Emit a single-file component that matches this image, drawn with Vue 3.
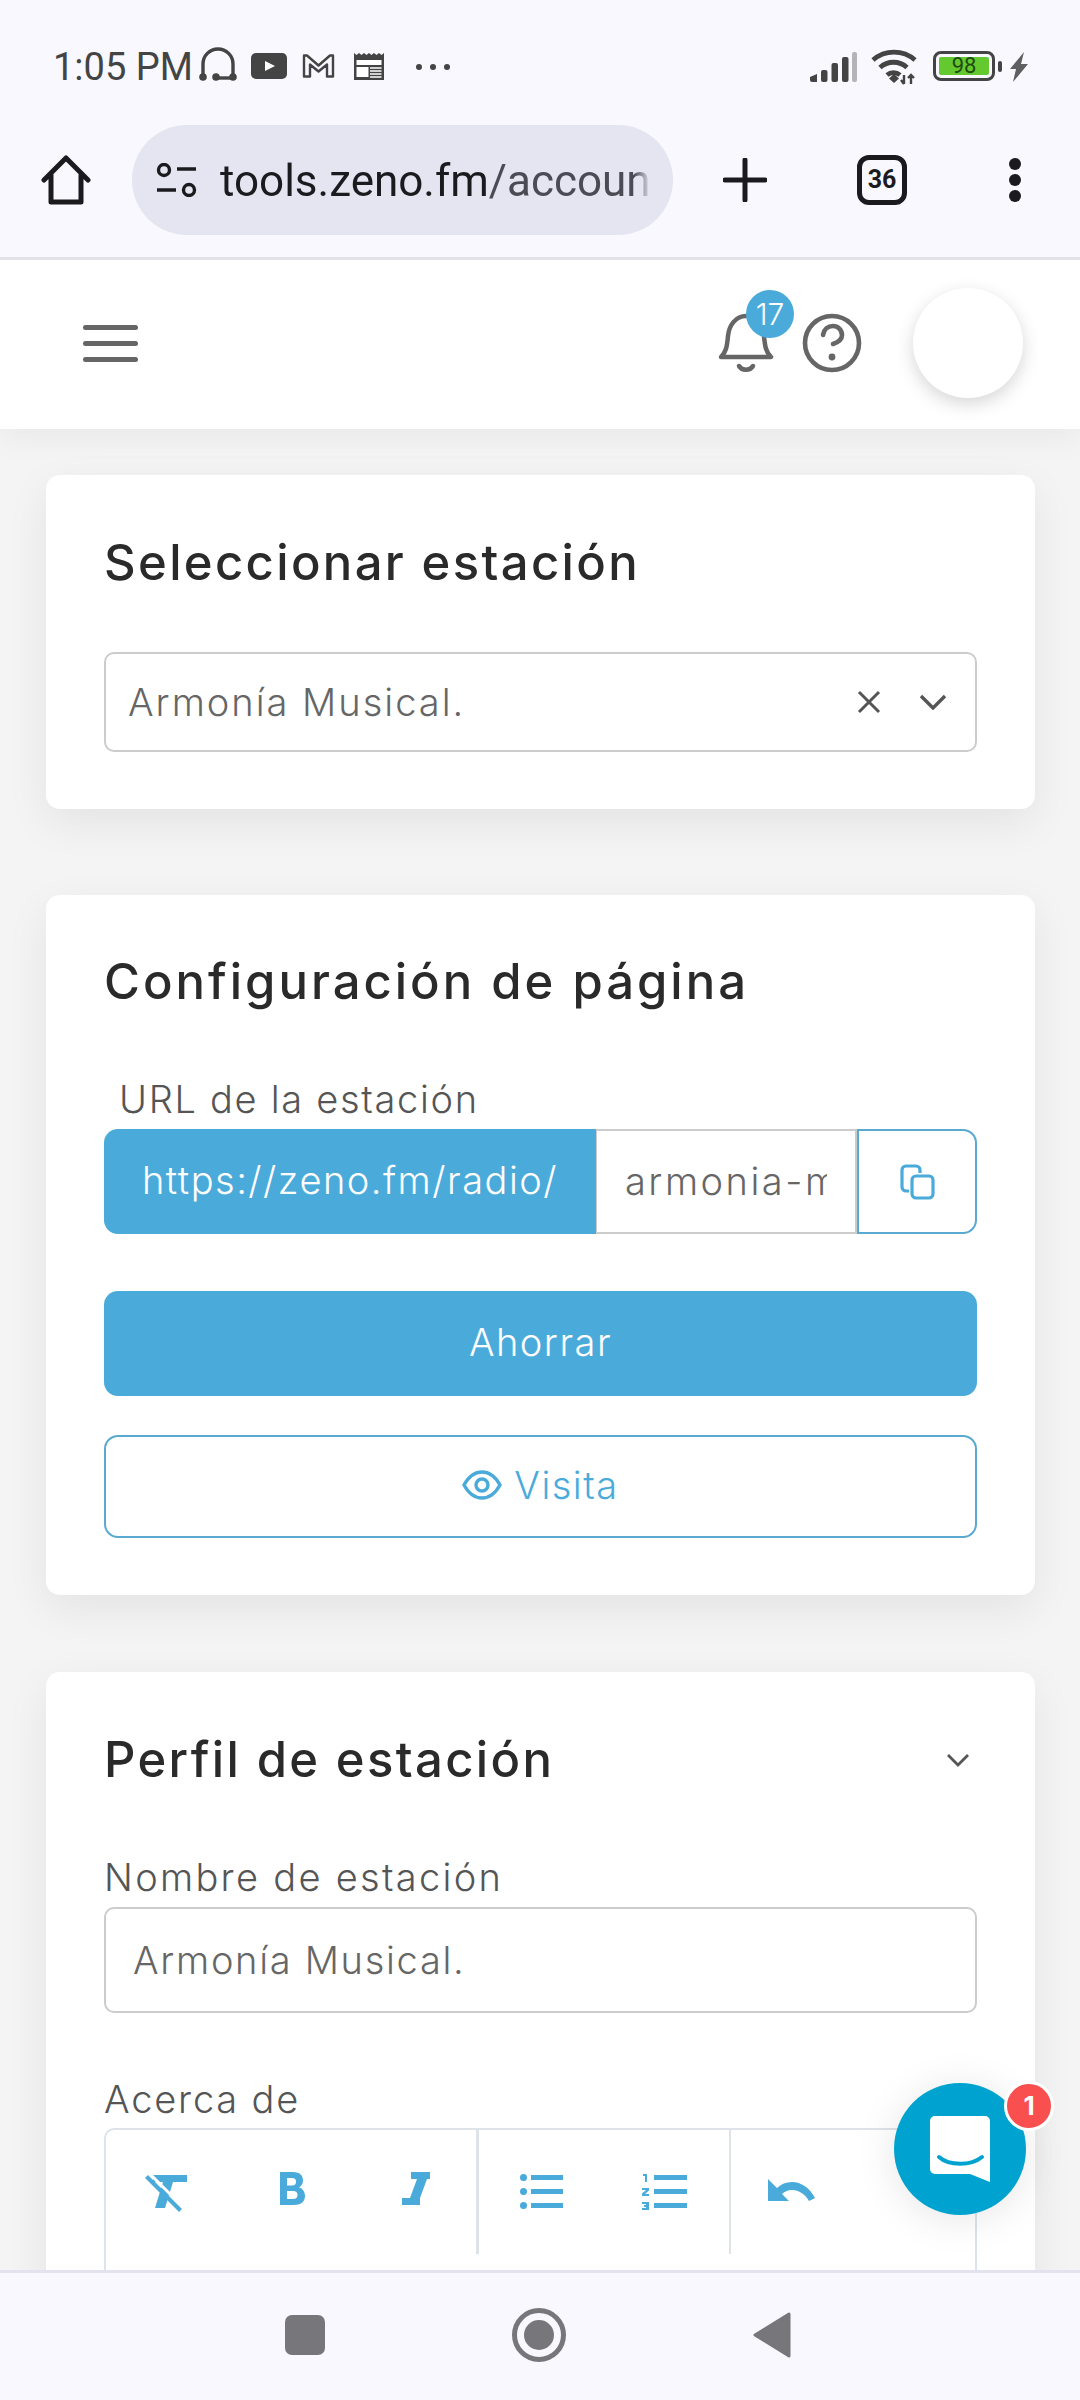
<script setup>
</script>

<template>
  <div class="phone">
    <header class="chrome">
      <div class="status">
        <span class="time">1:05 PM</span>
        <svg class="si headset" viewBox="0 0 38 36"><path d="M4 28V17a15 15 0 0 1 30 0v11" fill="none" stroke="#444" stroke-width="3.4"/><path d="M16 31h18" stroke="#444" stroke-width="3.4"/><circle cx="4" cy="30" r="3.8" fill="#444"/><circle cx="17" cy="30" r="3.8" fill="#444"/><circle cx="34" cy="30" r="3.8" fill="#444"/></svg>
        <svg class="si yt" viewBox="0 0 36 26"><rect width="36" height="26" rx="5" fill="#444"/><path d="M14 8l10 5-10 5z" fill="#fff"/></svg>
        <svg class="si gm" viewBox="0 0 33 26"><path d="M2 24V3h3l11.5 10L28 3h3v21h-6V12l-8.500 7-8.500-7v12z" fill="none" stroke="#444" stroke-width="2.4" stroke-linejoin="round"/></svg>
        <svg class="si news" viewBox="0 0 30 28"><path d="M0 1l2.500 2 2.500-2 2.500 2 2.500-2 2.500 2 2.500-2 2.500 2 2.500-2 2.500 2 2.500-2 2.500 2 2.500-2v27H0z" fill="#444"/><rect x="2.500" y="8" width="25" height="5" fill="#fff"/><rect x="2.500" y="15" width="12" height="10" fill="#fff"/><path d="M16 16h11.500M16 19h11.500M16 22h11.500M16 25h11.500" stroke="#fff" stroke-width="1.400"/></svg>
        <span class="dots"><i></i><i></i><i></i></span>
        <span class="spacer"></span>
        <svg class="si sig" viewBox="0 0 47 30"><g fill="#444"><path d="M0 25l7-3v8H2a2 2 0 0 1-2-2z"/><rect x="11" y="18" width="6.500" height="12" rx="2"/><rect x="21.500" y="11" width="6.500" height="19" rx="2"/><rect x="32" y="5" width="6.500" height="25" rx="2"/></g><rect x="42" y="0" width="5" height="30" rx="2" fill="#b4b4b8"/></svg>
        <svg class="si wifi" viewBox="0 0 46 36"><g fill="none" stroke="#444" stroke-width="4.800"><path d="M2 11a32 32 0 0 1 42 0"/><path d="M9 18.500a20 20 0 0 1 27 0"/><path d="M16 26a10 10 0 0 1 13 0"/></g><path d="M23 25l5 4.500-5 4.500-5-4.500z" fill="#444"/><path d="M33 26v9M30 31l3 4M40 26v9M37 29l3-3 3 3" stroke="#444" stroke-width="2.400" fill="none"/></svg>
        <div class="batt"><span class="level">98</span></div>
        <span class="tip"></span>
        <svg class="si bolt" viewBox="0 0 19 30"><path d="M15 0L1 17h6L4 30l15-18h-7z" fill="#5f5f62"/></svg>
      </div>
      <div class="toolbar">
        <svg class="ti home" viewBox="0 0 50 50"><path d="M3 25L25 3l22 22M10 20v27h30V20" fill="none" stroke="#1b1b1f" stroke-width="5" stroke-linejoin="round" stroke-linecap="round"/></svg>
        <div class="pill">
          <svg class="tune" viewBox="0 0 41 34"><circle cx="8" cy="7" r="5.500" fill="none" stroke="#1b1b1f" stroke-width="3.400"/><circle cx="33" cy="27" r="5.500" fill="none" stroke="#1b1b1f" stroke-width="3.400"/><path d="M21 6h19M1 27h19" stroke="#1b1b1f" stroke-width="3.400"/></svg>
          <div class="url"><b>tools.zeno.fm</b>/accoun<span class="tail">t</span></div>
        </div>
        <svg class="ti plus" viewBox="0 0 44 44"><path d="M2 22h40M22 2v40" stroke="#1b1b1f" stroke-width="5" stroke-linecap="round"/></svg>
        <div class="tabs">36</div>
        <span class="more"><i></i><i></i><i></i></span>
      </div>
    </header>

    <main class="content">
      <div class="appbar">
        <div class="burger"><i></i><i></i><i></i></div>
        <span class="spacer"></span>
        <div class="bell">
          <svg viewBox="0 0 60 62"><path d="M4 45c5-5 6-10 7-21 1-11 8-20 18-20s17 9 18 20c1 11 2 16 7 21z" fill="none" stroke="#666" stroke-width="4.500" stroke-linejoin="round"/><path d="M22 54c3 5 11 5 14 0" fill="none" stroke="#666" stroke-width="4.500" stroke-linecap="round"/></svg>
          <span class="count">17</span>
        </div>
        <svg class="help" viewBox="0 0 60 60"><circle cx="30" cy="30" r="27" fill="none" stroke="#666" stroke-width="4.600"/><path d="M21 22c1-6 5-9 10-9s9 4 9 9c0 4-3 7-9 9" fill="none" stroke="#666" stroke-width="4.600" stroke-linecap="round"/><circle cx="30" cy="44" r="3.400" fill="#666"/></svg>
        <div class="avatar"></div>
      </div>

      <section class="card one">
        <h2>Seleccionar estación</h2>
        <div class="select">
          <span class="grow">Armonía Musical.</span>
          <svg class="x" viewBox="0 0 24 24"><path d="M2 2l20 20M22 2L2 22" stroke="#555" stroke-width="3"/></svg>
          <svg class="chev" viewBox="0 0 28 16"><path d="M2 2l12 12L26 2" fill="none" stroke="#555" stroke-width="3.400"/></svg>
        </div>
      </section>

      <section class="card two">
        <h2>Configuración de página</h2>
        <label class="url-label">URL de la estación</label>
        <div class="group">
          <span class="prefix">https://zeno.fm/radio/</span>
          <span class="slug"><span>armonia-musical</span></span>
          <button class="copy">
            <svg viewBox="0 0 36 36"><path d="M10 27H7a4 4 0 0 1-4-4V6a4 4 0 0 1 4-4h10a4 4 0 0 1 4 4v3" fill="none" stroke="#4aabdb" stroke-width="3.200"/><rect x="13" y="12" width="21" height="22" rx="4" fill="none" stroke="#4aabdb" stroke-width="3.200"/></svg>
          </button>
        </div>
        <button class="save">Ahorrar</button>
        <button class="visit">
          <svg viewBox="0 0 40 30"><path d="M2 15C7 6 13 2 20 2s13 4 18 13c-5 9-11 13-18 13S7 24 2 15z" fill="none" stroke="#4aabdb" stroke-width="3.400"/><circle cx="20" cy="15" r="6" fill="none" stroke="#4aabdb" stroke-width="3.400"/></svg>
          Visita
        </button>
      </section>

      <section class="card three">
        <div class="title-row">
          <h2>Perfil de estación</h2>
          <svg class="small-chev" viewBox="0 0 24 14"><path d="M2 2l10 10L22 2" fill="none" stroke="#555" stroke-width="2.800"/></svg>
        </div>
        <label class="field-label">Nombre de estación</label>
        <div class="input">Armonía Musical.</div>
        <label class="field-label about">Acerca de</label>
        <div class="editor">
          <div class="tools">
            <div class="tgroup first">
              <svg class="clear" viewBox="0 0 42 36"><path d="M8 0h34v7H28l-8 26H10l8-26H8z" fill="#4aabdb"/><path d="M4.500 -1.500l34 34" stroke="#fff" stroke-width="3"/><path d="M1.500 1.500l34 34" stroke="#4aabdb" stroke-width="4"/></svg>
              <svg class="bold" viewBox="0 0 25 33"><path d="M0 0h13c7 0 10 3.500 10 8.500 0 3-1.500 5.500-4 7 3.500 1 6 4 6 8.500 0 6-4.500 9-11 9H0zM7 6v7.500h5c3 0 4-1.500 4-3.800S15 6 12 6zM7 19v8h6c3 0 4.500-1.500 4.500-4s-1.500-4-4.500-4z" fill="#4aabdb" fill-rule="evenodd"/></svg>
              <svg class="ital" viewBox="0 0 28 33"><path d="M9 0h19v7h-3l-7 19v7H0v-7h8l7-19H9z" fill="#4aabdb"/></svg>
            </div>
            <div class="tgroup second">
              <svg class="bullets" viewBox="0 0 43 36"><g fill="#4aabdb"><circle cx="3.500" cy="3.500" r="3.500"/><circle cx="3.500" cy="17.500" r="3.500"/><circle cx="3.500" cy="31.500" r="3.500"/><rect x="11" y="1" width="32" height="5"/><rect x="11" y="15" width="32" height="5"/><rect x="11" y="29" width="32" height="5"/></g></svg>
              <svg class="numbers" viewBox="0 0 45 36"><g fill="#4aabdb"><rect x="12" y="1" width="33" height="5"/><rect x="12" y="15" width="33" height="5"/><rect x="12" y="29" width="33" height="5"/><path d="M1 0h4v8H3V2H1zM0 14h7v2.500l-4 3.500h4v2H0v-2.500L4 16H0zM0 28h7v8H0v-2h4v-1H2v-2h2v-1H0z"/></g></svg>
            </div>
            <div class="tgroup third">
              <svg viewBox="0 0 48 22"><path d="M0 0v22h21l-7-7c3-2.500 6-4 10-4 7 0 13 4 17 11l6-3C42 9 33 3 24 3c-6 0-11 2-15 6z" fill="#4aabdb"/></svg>
            </div>
          </div>
        </div>
      </section>
    </main>

    <div class="fab">
      <svg viewBox="0 0 60 66"><path d="M5 0h50a5 5 0 0 1 5 5v61L40 58H5a5 5 0 0 1-5-5V5a5 5 0 0 1 5-5z" fill="#fff"/><path d="M9 41c10 9 32 9 43 0" fill="none" stroke="#00a3cf" stroke-width="4" stroke-linecap="round"/></svg>
      <span class="fab-badge">1</span>
    </div>

    <footer class="nav">
      <span class="sq"></span>
      <span class="ring"><i></i></span>
      <svg class="back" viewBox="0 0 38 46"><path d="M36 2v42L2 23z" fill="#77777b" stroke="#77777b" stroke-width="3" stroke-linejoin="round"/></svg>
    </footer>
  </div>
</template>

<style>
html, body { margin: 0; background: #f4f4f4; }
</style>

<style scoped>
* { box-sizing: border-box; }
.phone {
  position: relative;
  width: 1080px;
  height: 2400px;
  overflow: hidden;
  display: flex;
  flex-direction: column;
  background: #f4f4f4;
  font-family: Inter, "DejaVu Sans", sans-serif;
  font-weight: 300;
  color: #555;
}
.chrome {
  height: 260px;
  background: #f8f8fe;
  border-bottom: 3px solid #e2e2e8;
  flex: none;
}
.status {
  height: 125px;
  padding: 46px 52px 0 53px;
  display: flex;
  align-items: flex-start;
}
.time {
  font: 400 38px/40px Roboto, sans-serif;
  color: #444;
  width: 146px;
  margin-top: 1px;
  white-space: nowrap;
}
.si { display: block; flex: none; }
.headset { width: 38px; height: 36px; margin-top: 1px; }
.yt { width: 36px; height: 26px; margin: 7px 0 0 14px; }
.gm { width: 33px; height: 27px; margin: 6px 0 0 15px; }
.news { width: 30px; height: 28px; margin: 6px 0 0 19px; }
.dots { display: flex; gap: 8px; margin: 18px 0 0 32px; }
.dots i { width: 6px; height: 6px; border-radius: 50%; background: #444; }
.spacer { flex: 1; }
.sig { width: 47px; height: 30px; margin-top: 6px; }
.wifi { width: 46px; height: 36px; margin: 3px 0 0 14px; }
.batt {
  width: 62px;
  height: 30px;
  margin: 5px 0 0 16px;
  border: 3px solid #444;
  border-radius: 8px;
  padding: 3px;
  display: flex;
}
.level {
  flex: 1;
  background: #63c92f;
  border-radius: 2px;
  font: 400 22px/18px Roboto, sans-serif;
  color: #1f4a10;
  text-align: center;
}
.tip { width: 4px; height: 11px; background: #444; border-radius: 2px; margin: 15px 0 0 3px; }
.bolt { width: 19px; height: 30px; margin: 6px 0 0 7px; }

.toolbar { height: 110px; display: flex; align-items: center; position: relative; }
.ti { display: block; flex: none; }
.home { width: 50px; height: 50px; margin-left: 41px; }
.pill {
  width: 541px;
  height: 110px;
  margin-left: 41px;
  background: #e4e5f0;
  border-radius: 55px;
  display: flex;
  align-items: center;
  padding-left: 24px;
}
.tune { width: 41px; height: 34px; flex: none; }
.url {
  margin: 2px 0 0 23px;
  width: 431px;
  overflow: hidden;
  white-space: nowrap;
  font: 400 44px/56px Roboto, sans-serif;
  color: #4a4b55;
  -webkit-mask-image: linear-gradient(90deg, #000 96%, transparent 100%);
  mask-image: linear-gradient(90deg, #000 96%, transparent 100%);
}
.url b { font-weight: 400; color: #1b1b1f; }
.plus { width: 44px; height: 44px; margin-left: 50px; }
.tabs {
  width: 50px;
  height: 50px;
  margin-left: 90px;
  border: 5px solid #1b1b1f;
  border-radius: 12px;
  font: 700 25px/40px Roboto, sans-serif;
  color: #1b1b1f;
  text-align: center;
}
.more { display: flex; flex-direction: column; gap: 4px; margin-left: 102px; }
.more i { width: 12px; height: 12px; border-radius: 50%; background: #1b1b1f; }

.content { flex: 1; min-height: 0; overflow: hidden; }
.appbar {
  height: 169px;
  background: #fff;
  display: flex;
  align-items: center;
  padding: 0 57px 0 83px;
  box-shadow: 0 8px 30px rgba(0, 0, 0, .05);
  position: relative;
}
.burger { display: flex; flex-direction: column; gap: 11px; margin-top: -3px; }
.burger i { display: block; width: 55px; height: 5px; border-radius: 3px; background: #666; }
.bell { position: relative; width: 60px; height: 62px; margin-top: -3px; }
.bell svg { display: block; width: 60px; height: 62px; }
.count {
  position: absolute;
  left: 29px;
  top: -22px;
  width: 48px;
  height: 48px;
  border-radius: 50%;
  background: #4aabdb;
  color: #fff;
  font-size: 30px;
  line-height: 48px;
  text-align: center;
}
.help { width: 60px; height: 60px; margin: -3px 0 0 25px; flex: none; }
.avatar {
  width: 110px;
  height: 110px;
  border-radius: 50%;
  background: #fff;
  margin: -3px 0 0 51px;
  box-shadow: 0 6px 18px rgba(0, 0, 0, .16);
}

.card {
  width: 989px;
  margin: 0 0 0 46px;
  padding: 0 58px;
  background: #fff;
  border-radius: 14px;
  box-shadow: 0 14px 44px rgba(0, 0, 0, .07);
}
.card h2 {
  margin: 0;
  font-size: 49px;
  font-weight: 450;
  letter-spacing: 2.35px;
  color: #2a2a2a;
  line-height: 56px;
}
.two h2 { letter-spacing: 3px; }
.one { margin-top: 46px; height: 334px; padding-top: 60px; }
.select {
  margin-top: 61px;
  height: 100px;
  border: 2px solid #ccc;
  border-radius: 10px;
  display: flex;
  align-items: center;
  padding: 0 28px 0 22px;
  font-size: 38px;
  letter-spacing: 2px;
  color: #666;
}
.grow { flex: 1; }
.x { width: 24px; height: 24px; }
.chev { width: 28px; height: 16px; margin-left: 38px; }

.two { margin-top: 86px; height: 700px; padding-top: 59px; }
.url-label { display: block; margin: 67px 0 0 15px; font-size: 38px; letter-spacing: 1.7px; line-height: 44px; color: #555; }
.group { margin-top: 8px; height: 105px; display: flex; }
.prefix {
  width: 492px;
  background: #4aabdb;
  color: #fff;
  border-radius: 14px 0 0 14px;
  font-size: 38px;
  letter-spacing: 1.5px;
  line-height: 103px;
  text-align: center;
  white-space: nowrap;
}
.slug {
  width: 261px;
  border: 2px solid #ccc;
  border-left: 1px solid #ccc;
  padding: 0 28px;
  font-size: 38px;
  letter-spacing: 2.5px;
  line-height: 101px;
  color: #666;
  white-space: nowrap;
  overflow: hidden;
}
.slug span { display: block; overflow: hidden; }
.copy {
  width: 120px;
  padding: 0;
  background: #fff;
  border: 2px solid #5aa9d0;
  border-radius: 0 14px 14px 0;
  display: flex;
  align-items: center;
  justify-content: center;
}
.copy svg { width: 36px; height: 36px; }
.save, .visit {
  display: flex;
  align-items: center;
  justify-content: center;
  width: 100%;
  font-family: inherit;
  font-weight: 300;
  font-size: 38px;
  letter-spacing: 1.5px;
  border-radius: 14px;
  padding: 0 0 3px;
}
.save { margin-top: 57px; height: 105px; background: #4aabdb; border: 0; color: #fff; }
.visit { margin-top: 39px; height: 103px; background: #fff; border: 2px solid #5aa9d0; color: #4aabdb; gap: 12px; }
.visit svg { width: 40px; height: 30px; }

.three { margin-top: 77px; height: 700px; padding-top: 60px; }
.title-row { display: flex; align-items: center; justify-content: space-between; padding-right: 7px; }
.small-chev { width: 24px; height: 14px; }
.field-label { display: block; margin-top: 67px; font-size: 38px; letter-spacing: 2.3px; line-height: 44px; color: #555; }
.input {
  margin-top: 8px;
  height: 106px;
  border: 2px solid #ccc;
  border-radius: 10px;
  padding-left: 27px;
  font-size: 38px;
  letter-spacing: 1.7px;
  line-height: 102px;
  color: #666;
}
.about { margin-top: 64px; letter-spacing: 1.8px; }
.editor {
  margin-top: 7px;
  height: 300px;
  border: 2px solid #dde3e8;
  border-bottom: 0;
  border-radius: 10px 10px 0 0;
}
.tools { display: flex; height: 124px; }
.tgroup { display: flex; align-items: flex-start; padding-top: 44px; }
.tgroup svg { display: block; flex: none; }
.first { width: 373px; padding-left: 39px; border-right: 3px solid #dde3e8; }
.clear { width: 42px; height: 36px; margin-top: 1px; overflow: visible; }
.bold { width: 25px; height: 33px; margin: -2px 0 0 93px; }
.ital { width: 28px; height: 33px; margin: -2px 0 0 97px; }
.second { width: 252px; padding-left: 41px; border-right: 2px solid #dde3e8; }
.second svg { height: 36px; }
.bullets { width: 43px; }
.numbers { width: 45px; margin-left: 79px; }
.third { padding-left: 37px; padding-top: 49px; }
.third svg { width: 48px; height: 22px; }

.fab {
  position: absolute;
  left: 894px;
  top: 2083px;
  width: 132px;
  height: 132px;
  border-radius: 50%;
  background: #00a3cf;
  box-shadow: 0 4px 40px rgba(0, 0, 0, .1);
  display: flex;
  align-items: center;
  justify-content: center;
}
.fab svg { width: 60px; height: 66px; }
.fab-badge {
  position: absolute;
  left: 110px;
  top: -2px;
  width: 50px;
  height: 50px;
  border-radius: 50%;
  border: 3px solid #fff;
  background: #f94f4f;
  color: #fff;
  font-size: 26px;
  font-weight: 700;
  line-height: 44px;
  text-align: center;
}

.nav {
  position: relative;
  flex: none;
  height: 130px;
  background: #f8f8fe;
  border-top: 3px solid #e2e3ee;
  display: flex;
  align-items: center;
  padding: 0 0 3px 285px;
}
.sq { width: 40px; height: 40px; border-radius: 7px; background: #77777b; }
.ring {
  width: 54px;
  height: 54px;
  margin-left: 187px;
  border: 5px solid #77777b;
  border-radius: 50%;
  display: flex;
  align-items: center;
  justify-content: center;
}
.ring i { width: 30px; height: 30px; border-radius: 50%; background: #77777b; }
.back { width: 38px; height: 46px; margin-left: 187px; }
</style>
